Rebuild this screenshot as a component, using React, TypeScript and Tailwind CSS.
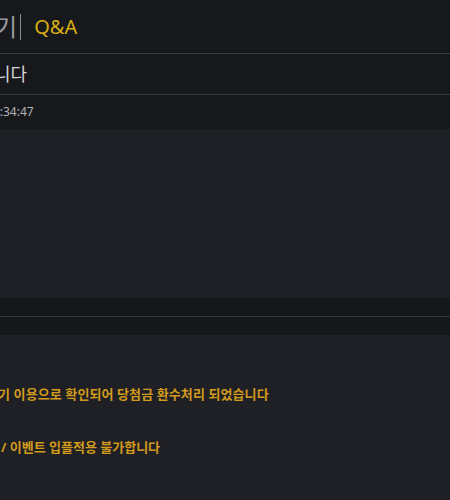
const font = {
  fontFamily: '"Noto Sans", "Noto Sans CJK KR", sans-serif',
};

export default function App() {
  return (
    <div
      className="w-[450px] h-[500px] overflow-hidden bg-[#1e2025] text-[#c8c8c8]"
      style={font}
    >
      {/* header */}
      <div className="h-[54px] bg-[#17181c] border-b border-[#3a3b3f] flex items-center">
        <div className="flex items-center ml-[-27px]">
          <span className="text-[24px] leading-none text-[#9a9ba0]">후기</span>
          <span className="ml-[3px] h-[26px] w-px bg-[#7f8a96]" />
          <span className="ml-[13px] text-[20px] leading-none text-[#d9ae14]">Q&amp;A</span>
        </div>
      </div>

      {/* subject */}
      <div className="h-[41px] bg-[#17181c] border-b border-[#3a3b3f] flex items-center">
        <span className="ml-[-110px] text-[18px] text-[#d2d2d4] whitespace-nowrap">확인 부탁드립니다</span>
      </div>

      {/* meta */}
      <div className="h-[34px] bg-[#17181c] flex items-center">
        <span className="ml-[-14px] text-[12px] text-[#b4b4b8]">12:34:47</span>
      </div>

      {/* question body */}
      <div className="h-[169px] bg-[#1e2025]" />

      {/* answer header */}
      <div className="h-[19px] bg-[#16171b] border-b border-[#36373b]" />
      <div className="h-[18px] bg-[#16171b]" />

      {/* answer body */}
      <div className="pt-[50px] text-[13px] font-bold text-[#d39a1c] leading-[19px]">
        <div className="ml-[-14px] whitespace-nowrap tracking-[0.1px]">꺾기 이용으로 확인되어 당첨금 환수처리 되었습니다</div>
        <div className="mt-[34px] ml-[1px] whitespace-nowrap">/ 이벤트 입플적용 불가합니다</div>
      </div>
    </div>
  );
}
